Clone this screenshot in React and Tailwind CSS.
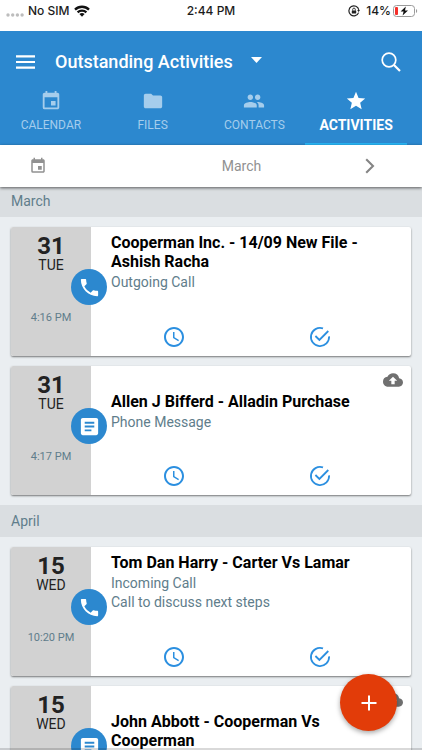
import {
  MdAccessTime,
  MdArticle,
  MdCloudUpload,
  MdEvent,
  MdFolder,
  MdPeople,
  MdPhone,
  MdStar,
} from 'react-icons/md';

const tabs = [
  { label: 'CALENDAR', icon: MdEvent },
  { label: 'FILES', icon: MdFolder },
  { label: 'CONTACTS', icon: MdPeople },
  { label: 'ACTIVITIES', icon: MdStar, active: true },
];

const sections = [
  {
    month: 'March',
    items: [
      { day: '31', weekday: 'TUE', time: '4:16 PM', type: 'call', title: 'Cooperman Inc. - 14/09 New File - Ashish Racha', lines: ['Outgoing Call'] },
      { day: '31', weekday: 'TUE', time: '4:17 PM', type: 'message', upload: true, title: 'Allen J Bifferd - Alladin Purchase', lines: ['Phone Message'] },
    ],
  },
  {
    month: 'April',
    items: [
      { day: '15', weekday: 'WED', time: '10:20 PM', type: 'call', title: 'Tom Dan Harry - Carter Vs Lamar', lines: ['Incoming Call', 'Call to discuss next steps'] },
      { day: '15', weekday: 'WED', type: 'message', upload: true, title: 'John Abbott - Cooperman Vs Cooperman', lines: [] },
    ],
  },
];

function StatusBar() {
  return (
    <div className="grid h-[31px] shrink-0 grid-cols-3 items-center bg-white pb-2.5 font-['Inter',sans-serif] text-xs font-medium text-[#1c1c1c]">
      <div className="flex items-center gap-1 pl-1.5">
        <svg className="mt-2 h-1 w-[18px]" viewBox="0 0 18 4" fill="#bdbdbd" aria-hidden="true">
          <circle cx="2" cy="2" r="1.7" />
          <circle cx="6.7" cy="2" r="1.7" />
          <circle cx="11.4" cy="2" r="1.7" />
          <circle cx="16.1" cy="2" r="1.7" />
        </svg>
        <span>No SIM</span>
        <svg className="h-3 w-4" viewBox="0 0 16 12" fill="none" stroke="#111" strokeWidth="2.3" aria-hidden="true">
          <path d="M1 4.6a10 10 0 0 1 14 0" />
          <path d="M3.6 7.4a6.3 6.3 0 0 1 8.8 0" />
          <path d="M8 11.8 5.4 9.1a3.8 3.8 0 0 1 5.2 0z" fill="#111" stroke="none" />
        </svg>
      </div>
      <div className="text-center">2:44 PM</div>
      <div className="flex items-center justify-end pr-1">
        <svg className="mr-1.5 h-3 w-3 shrink-0" viewBox="0 0 12 12" fill="none" stroke="#222" aria-hidden="true">
          <path d="M10.6 7.6A5 5 0 1 1 10.8 4.8" strokeWidth="1.2" />
          <path d="M9.2 5h2.8l-1.4 2z" fill="#222" stroke="none" />
          <rect x="3.8" y="5.4" width="4.4" height="3.2" rx=".5" fill="#222" stroke="none" />
          <path d="M4.7 5.6V4.4a1.3 1.3 0 0 1 2.6 0v1.2" strokeWidth=".9" />
        </svg>
        <span>14%</span>
        <svg className="ml-0.5 h-3 w-[25px] shrink-0" viewBox="0 0 25 12" aria-hidden="true">
          <rect x=".5" y=".5" width="21" height="11" rx="3" fill="none" stroke="#9a9a9a" />
          <path d="M23 4v4c1.6-.6 1.6-3.4 0-4z" fill="#9a9a9a" />
          <rect x="2" y="2" width="3" height="8" rx="1" fill="#f5302b" />
          <path d="M12.8 1.6 7.6 6.6h3l-1 4 5.4-5.2h-3z" fill="#111" />
        </svg>
      </div>
    </div>
  );
}

function Header() {
  return (
    <header className="shrink-0 bg-[#2c88cf] text-white">
      <div className="flex h-[58px] items-center pt-1 pr-[21px] pl-4">
        <button type="button" aria-label="Menu" className="mr-5">
          <svg className="h-[14px] w-[19px]" viewBox="0 0 19 14" fill="#fff" aria-hidden="true">
            <path d="M0 .3h19v2.2H0zM0 5.9h19v2.2H0zM0 11.5h19v2.2H0z" />
          </svg>
        </button>
        <h1 className="text-lg font-medium">Outstanding Activities</h1>
        <button type="button" aria-label="Choose list" className="ml-[18px]">
          <svg className="mb-1 h-[6px] w-[11px]" viewBox="0 0 11 6" fill="#fff" aria-hidden="true">
            <path d="M0 0h11L5.5 6z" />
          </svg>
        </button>
        <button type="button" aria-label="Search" className="ml-auto">
          <svg className="h-5 w-5" viewBox="0 0 20 20" fill="none" stroke="#fff" aria-hidden="true">
            <circle cx="8" cy="8" r="6.8" strokeWidth="1.7" />
            <path d="m13 13 6 6" strokeWidth="2.2" />
          </svg>
        </button>
      </div>
      <nav className="grid h-14 grid-cols-4 pr-[15px]">
        {tabs.map(({ label, icon: Icon, active }) => (
          <button
            key={label}
            type="button"
            className={
              active
                ? 'flex flex-col items-center justify-end border-b-2 border-[#29b6f6] pb-2 text-sm leading-5 font-bold'
                : 'flex flex-col items-center justify-end border-b-2 border-transparent pb-2 text-xs leading-5 text-[#a5cdec]'
            }
          >
            <Icon className="mb-[3px] size-[22px] shrink-0" />
            {label}
          </button>
        ))}
      </nav>
    </header>
  );
}

function MonthBar() {
  return (
    <div className="relative z-10 flex h-[42px] shrink-0 items-center bg-white pr-[42px] pl-[29px] text-[#919191] shadow-[0_1px_3px_rgba(0,0,0,0.6)]">
      <button type="button" aria-label="Pick a date">
        <MdEvent className="size-[18px]" />
      </button>
      <span className="flex-1 pl-[75px] text-center text-sm">March</span>
      <button type="button" aria-label="Next month" className="w-[19px]">
        <svg className="ml-1 h-4 w-[10px]" viewBox="0 0 10 16" fill="none" stroke="#858585" strokeWidth="2.1" aria-hidden="true">
          <path d="m1.2 1.2 6.8 6.8-6.8 6.8" />
        </svg>
      </button>
    </div>
  );
}

function ActivityCard({ item }) {
  const TypeIcon = item.type === 'call' ? MdPhone : MdArticle;

  return (
    <li className="relative flex min-h-[129px] rounded-xs bg-white shadow-[0_1px_2px_rgba(0,0,0,0.5)]">
      <div className="flex w-20 shrink-0 flex-col items-center rounded-l-xs bg-[#d2d2d2] pt-[7px] text-[#222]">
        <span className="text-2xl leading-6 font-bold">{item.day}</span>
        <span className="text-sm leading-[14px]">{item.weekday}</span>
        {item.time && <span className="mt-10 text-[11px] leading-3 text-[#607d8b]">{item.time}</span>}
      </div>
      <div className="absolute top-[42px] left-[60px] flex size-9 items-center justify-center rounded-full bg-[#2c88cf] text-white">
        <TypeIcon className="size-[23px]" />
      </div>
      <div className="flex flex-1 flex-col">
        <div className={item.upload ? 'pt-[26px] pr-4 pl-5' : 'pt-1.5 pr-4 pl-5'}>
          <h3 className="text-base leading-[19px] font-bold text-black">{item.title}</h3>
          <div className="pt-0.5 text-sm leading-[19px] text-[#607d8b]">
            {item.lines.map((line) => (
              <p key={line}>{line}</p>
            ))}
          </div>
        </div>
        <div className="mt-auto mr-[18px] ml-[10px] grid grid-cols-2 justify-items-center pb-[7px] text-[#2b8fe0]">
          <button type="button" aria-label="Snooze">
            <MdAccessTime className="size-6" />
          </button>
          <button type="button" aria-label="Mark as done">
            <svg className="size-6" viewBox="0 0 24 24" fill="none" stroke="currentColor" strokeWidth="1.8" aria-hidden="true">
              <path d="M21.1 11.4A9.1 9.1 0 1 1 15 3.4" />
              <path d="m7.4 11 4 4L20.3 6" />
            </svg>
          </button>
        </div>
      </div>
      {item.upload && <MdCloudUpload className="absolute top-1 right-2 size-5 text-[#707070]" aria-label="Waiting to upload" />}
    </li>
  );
}

export default function App() {
  return (
    <div className="relative flex h-screen flex-col overflow-hidden bg-[#eaeef1] font-['Roboto',sans-serif]">
      <StatusBar />
      <Header />
      <MonthBar />
      <main className="-mt-0.5 min-h-0 flex-1 overflow-hidden">
        {sections.map((section) => (
          <section key={section.month}>
            <h2 className="flex h-8 items-center bg-[#dadee1] px-[11px] text-sm text-[#607d8b]">{section.month}</h2>
            <ul className="flex flex-col gap-[10px] px-[11px] py-[10px]">
              {section.items.map((item, index) => (
                <ActivityCard key={index} item={item} />
              ))}
            </ul>
          </section>
        ))}
      </main>
      <div className="absolute inset-x-0 bottom-0 h-0.5 bg-black/15" />
      <button
        type="button"
        aria-label="Add activity"
        className="absolute right-[25px] bottom-[19px] flex size-[57px] items-center justify-center rounded-full bg-[#e23c09] text-white shadow-[0_2px_5px_rgba(0,0,0,0.35)]"
      >
        <svg className="size-4" viewBox="0 0 16 16" fill="none" stroke="currentColor" strokeWidth="2" aria-hidden="true">
          <path d="M8 .5v15M.5 8h15" />
        </svg>
      </button>
    </div>
  );
}
